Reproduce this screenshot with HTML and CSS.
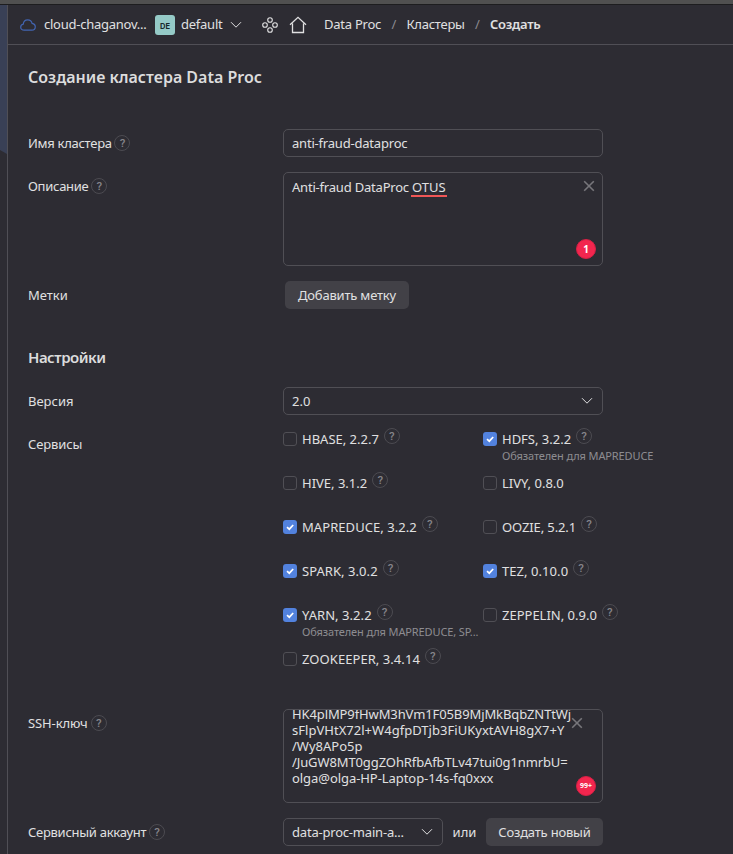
FILE: index.html
```html
<!DOCTYPE html>
<html lang="ru">
<head>
<meta charset="utf-8">
<title>Создание кластера Data Proc</title>
<link rel="stylesheet" href="styles.css">
</head>
<body>
<svg class="defs" width="0" height="0">
  <symbol id="chevron" viewBox="0 0 12 8"><path d="M1 1.2 6 6.2 11 1.2"/></symbol>
  <symbol id="cross" viewBox="0 0 12 12"><path d="M1.200 1.200 10.800 10.800M10.800 1.200 1.200 10.800"/></symbol>
  <symbol id="tick" viewBox="0 0 14 14"><path d="M4 7.2 6.3 9.2 10.2 5"/></symbol>
</svg>
<div class="frame"></div>
<div class="shell">
  <aside class="rail"><div class="rail-fill"></div></aside>
  <main class="page">
    <header class="topbar">
      <svg class="cloud" viewBox="0 0 16 12"><path d="M4.2 11.2C2 11.2.7 9.9.7 8.200.7 6.600 1.700 5.400 3.300 5.100 3.500 2.600 5.300.8 7.700.8 10 .8 11.600 2.200 12.100 4.400 14.100 4.700 15.300 6 15.300 7.800 15.300 9.800 13.900 11.200 11.900 11.200Z"/></svg>
      <span class="cloud-name">cloud-chaganov...</span>
      <span class="folder-badge">DE</span>
      <span class="folder-name">default</span>
      <svg class="chevron folder-chevron"><use href="#chevron"/></svg>
      <svg class="nodes" viewBox="0 0 16 16"><circle cx="8" cy="3" r="2.300"/><circle cx="3" cy="8" r="2.300"/><circle cx="13" cy="8" r="2.300"/><circle cx="8" cy="13" r="2.300"/></svg>
      <svg class="home" viewBox="0 0 18 18"><path d="M1 8.800 9 1.300 17 8.800M3.500 7.500V16.500H14.500V7.500"/></svg>
      <nav class="crumbs">
        <span>Data Proc</span><i>/</i><span>Кластеры</span><i>/</i><b>Создать</b>
      </nav>
    </header>
    <h1>Создание кластера Data Proc</h1>
    <section class="form">
      <div class="row">
        <div class="label"><span class="tight">Имя кластера</span><span class="help">?</span></div>
        <div class="box field name">anti-fraud-dataproc</div>
      </div>
      <div class="row">
        <div class="label"><span class="tight">Описание</span><span class="help">?</span></div>
        <div class="box area">
          <div class="area-text name">Anti-fraud DataProc <span class="typo">OTUS</span></div>
          <svg class="clear"><use href="#cross"/></svg>
          <span class="count">1</span>
        </div>
      </div>
      <div class="row">
        <div class="label"><span>Метки</span></div>
        <div class="button add">Добавить метку</div>
      </div>
    </section>
    <h2>Настройки</h2>
    <section class="form">
      <div class="row">
        <div class="label"><span>Версия</span></div>
        <div class="box field select"><span>2.0</span><svg class="chevron"><use href="#chevron"/></svg></div>
      </div>
      <div class="row">
        <div class="label"><span class="snug">Сервисы</span></div>
        <div class="services">
          <div class="service"><span class="check"></span><span>HBASE, 2.2.7</span><span class="help">?</span></div>
          <div class="service"><span class="check on"><svg><use href="#tick"/></svg></span><span>HDFS, 3.2.2</span><span class="help">?</span><small>Обязателен для MAPREDUCE</small></div>
          <div class="service"><span class="check"></span><span>HIVE, 3.1.2</span><span class="help">?</span></div>
          <div class="service"><span class="check"></span><span>LIVY, 0.8.0</span></div>
          <div class="service"><span class="check on"><svg><use href="#tick"/></svg></span><span class="loose">MAPREDUCE, 3.2.2</span><span class="help">?</span></div>
          <div class="service"><span class="check"></span><span class="snug">OOZIE, 5.2.1</span><span class="help">?</span></div>
          <div class="service"><span class="check on"><svg><use href="#tick"/></svg></span><span class="loose">SPARK, 3.0.2</span><span class="help">?</span></div>
          <div class="service"><span class="check on"><svg><use href="#tick"/></svg></span><span class="loose">TEZ, 0.10.0</span><span class="help">?</span></div>
          <div class="service"><span class="check on"><svg><use href="#tick"/></svg></span><span class="loose">YARN, 3.2.2</span><span class="help">?</span><small>Обязателен для MAPREDUCE, SP...</small></div>
          <div class="service"><span class="check"></span><span>ZEPPELIN, 0.9.0</span><span class="help">?</span></div>
          <div class="service"><span class="check"></span><span class="loose">ZOOKEEPER, 3.4.14</span><span class="help">?</span></div>
        </div>
      </div>
      <div class="row">
        <div class="label"><span class="snug">SSH-ключ</span><span class="help">?</span></div>
        <div class="box area key">
          <div class="area-text"><div class="snug">HK4plMP9fHwM3hVm1F05B9MjMkBqbZNTtWj</div><div class="second">sFlpVHtX72l+W4gfpDTjb3FiUKyxtAVH8gX7+Y</div><div>/Wy8APo5p</div><div class="snug">/JuGW8MT0ggZOhRfbAfbTLv47tui0g1nmrbU=</div><div class="host">olga@olga-HP-Laptop-14s-fq0xxx</div></div>
          <svg class="clear"><use href="#cross"/></svg>
          <span class="count many">99+</span>
        </div>
      </div>
      <div class="row">
        <div class="label"><span class="tight">Сервисный аккаунт</span><span class="help">?</span></div>
        <div class="account">
          <div class="box field select short"><span class="name">data-proc-main-a...</span><svg class="chevron"><use href="#chevron"/></svg></div>
          <span>или</span>
          <div class="button create">Создать новый</div>
        </div>
      </div>
    </section>
  </main>
</div>
</body>
</html>
```
FILE: styles.css
```css
* { box-sizing: border-box; }
html, body { height: 100%; }
body {
  margin: 0;
  overflow: hidden;
  background: #2d2c33;
  color: #e0e0e1;
  font: 13px/18px "Noto Sans", "Open Sans", sans-serif;
  white-space: nowrap;
}
svg { fill: none; stroke: currentColor; flex: none; }
.defs { position: absolute; }
.tight { letter-spacing: -0.28px; }
.name { letter-spacing: -0.2px; }
.snug { letter-spacing: -0.11px; }
.loose { letter-spacing: 0.06px; }
.second { letter-spacing: 0.03px; }
.host { letter-spacing: -0.06px; }

.frame { height: 5px; background: #505050; border-bottom: 1px solid #1d1d1f; }
.shell { display: flex; height: 849px; }
.rail { width: 8px; border-right: 1px solid #504f56; flex: none; }
.rail-fill { height: 149px; background: #394056; clip-path: polygon(0 0, 100% 0, 100% 100%, 0 145px); }
.page { flex: 1; min-width: 0; }

.topbar { height: 40px; display: flex; align-items: center; padding-left: 12px; border-bottom: 1px solid #504f56; }
.cloud { width: 16px; height: 12px; color: #4264b1; stroke-width: 1.2; }
.cloud-name { width: 103px; margin-left: 8px; padding-bottom: 2px; letter-spacing: -0.25px; }
.folder-badge { width: 20px; height: 20px; margin-left: 8px; border-radius: 3px; background: #95cac7; color: #17292b; font: bold 7.5px/23px Inter, sans-serif; text-align: center; }
.folder-name { width: 42px; margin-left: 6px; padding-bottom: 2px; letter-spacing: -0.25px; }
.chevron { width: 12px; height: 8px; }
.folder-chevron { margin-left: 7px; }
.nodes { width: 16px; height: 16px; margin-left: 20px; stroke-width: 1.1; }
.home { width: 18px; height: 18px; margin-left: 11px; stroke-width: 1.300; }
.crumbs { display: flex; margin-left: 17px; padding-bottom: 2px; letter-spacing: -0.24px; }
.crumbs i { width: 25.300px; text-align: center; font-style: normal; color: #8b8a8f; }
.crumbs b { font-weight: 600; letter-spacing: -0.25px; }

h1, h2 { margin: 0 0 0 20px; font-weight: 600; color: #dcdcdd; }
h1 { height: 84px; padding-top: 20px; font-size: 16px; line-height: 24px; letter-spacing: 0; }
h2 { height: 78px; padding-top: 38px; font-size: 15px; line-height: 20px; letter-spacing: -0.5px; }
.form { display: grid; gap: 15px; padding-left: 20px; }
.row { display: grid; grid-template-columns: 255px 320px; }
.label { height: 28px; display: flex; align-items: center; gap: 3px; }
.help { width: 16px; height: 16px; border: 1px solid #4c4b51; border-radius: 50%; color: #85848a; font: 500 11.5px/14px Roboto, sans-serif; text-align: center; flex: none; }
.label .tight + .help { margin-left: -0.300px; }
.box { border: 1px solid #504f55; border-radius: 5px; }
.field { height: 28px; padding: 4px 8px; }
.area { height: 94px; padding: 6px 8px; line-height: 16px; position: relative; overflow: hidden; }
.key { padding-top: 0; }
.key .area-text { margin-top: -4px; }
.typo { display: inline-block; height: 16px; margin-left: -1px; padding: 0 1px; box-shadow: 0 2px #f05656; letter-spacing: 0; }
.clear { position: absolute; top: 7px; right: 7px; width: 12px; height: 12px; color: #77767b; stroke-width: 1.6; }
.key .clear { right: 19px; }
.count { position: absolute; right: 6px; bottom: 6px; width: 20px; height: 20px; border-radius: 50%; background: #f2264e; border: 1px solid #d62045; color: #fff; font: bold 10px/18px "Noto Sans", sans-serif; text-align: center; }
.many { font: bold 7px/18px "Noto Sans", sans-serif; }
.button { height: 28px; border-radius: 5px; background: #424147; text-align: center; line-height: 28px; letter-spacing: -0.2px; }
.add { width: 124px; margin-left: 2px; }
.select { display: flex; align-items: center; justify-content: space-between; padding-right: 9px; }
.short { width: 160px; }
.account { display: flex; align-items: center; justify-content: space-between; }
.create { width: 117px; }

.services { display: grid; grid-template-columns: 200px 200px; grid-auto-rows: 44px; }
.service { display: grid; grid-template-columns: 14px max-content 16px 1fr; grid-template-rows: 18px 16px; column-gap: 5px; }
.service .help { margin-top: -2px; }
.service small { grid-column: 2 / 5; font-size: 11px; line-height: 16px; letter-spacing: -0.12px; color: #8d8c91; }
.check { width: 14px; height: 14px; margin-top: 2px; border: 1px solid #504f55; border-radius: 3px; }
.on { border: 0; background: #5282de; }
.on svg { display: block; width: 14px; height: 14px; color: #fff; stroke-width: 1.700; }
```
